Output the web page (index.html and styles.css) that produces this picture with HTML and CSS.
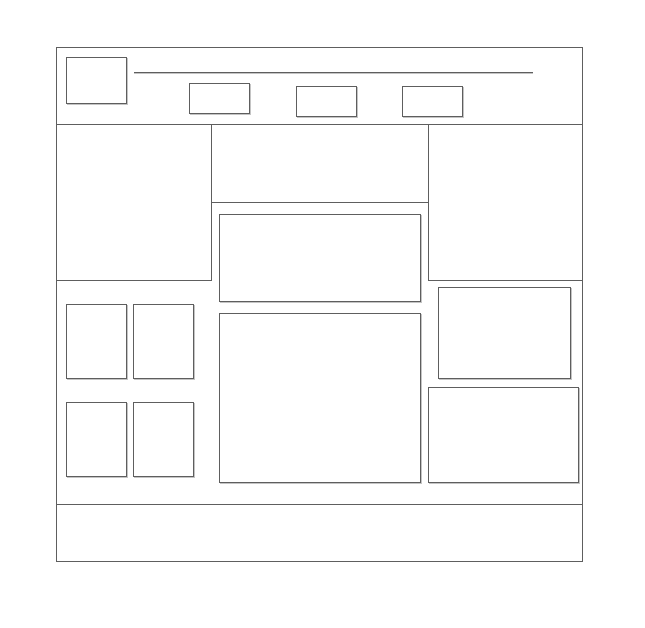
FILE: index.html
```html
<!DOCTYPE html>
<html lang="en">
	<head>
		<meta charset="UTF-8" />
		<meta name="viewport" content="width=device-width, initial-scale=1.0" />
		<link rel="stylesheet" href="styles.css">
		<title>Wireframe</title>
	</head>
	<body>
		<div class="frame">
			<div class="header">
				<div class="logo box"></div>
				<div class="head_right">
					<div class="rule"></div>
					<div class="nav">
						<div class="nav_item box first"></div>
						<div class="nav_item box"></div>
						<div class="nav_item box"></div>
					</div>
				</div>
			</div>
			<div class="main">
				<div class="left_top"></div>
				<div class="mid_top"></div>
				<div class="right_top"></div>
				<div class="left_bottom">
					<div class="thumb box"></div>
					<div class="thumb box"></div>
					<div class="thumb box"></div>
					<div class="thumb box"></div>
				</div>
				<div class="mid_content">
					<div class="mid_box box"></div>
					<div class="mid_box big box"></div>
				</div>
				<div class="right_bottom">
					<div class="side_a box"></div>
					<div class="side_b box"></div>
				</div>
			</div>
			<div class="footer"></div>
		</div>
	</body>
</html>
```

FILE: styles.css
```css
* {
	margin: 0;
	padding: 0;
	box-sizing: border-box;
}
body {
	background-color: #fff;
	width: 645px;
	height: 628px;
}
.box {
	border: 1px solid #5e5e5e;
	box-shadow: 1px 1px 0 #c4c4c4;
}
.frame {
	margin: 47px 0 0 56px;
	width: 527px;
	height: 515px;
	border: 1px solid #5e5e5e;
	display: flex;
	flex-direction: column;
}

/* header */
.header {
	height: 77px;
	border-bottom: 1px solid #5e5e5e;
	display: flex;
	align-items: flex-start;
	padding: 9px 0 0 9px;
}
.logo {
	width: 61px;
	height: 47px;
}
.head_right {
	margin-left: 7px;
	padding-top: 15px;
}
.rule {
	width: 399px;
	height: 1px;
	background-color: #5e5e5e;
	box-shadow: 0 1px 0 #c4c4c4;
}
.nav {
	display: flex;
	align-items: flex-start;
	margin-top: 10px;
	padding-left: 55px;
}
.nav_item {
	width: 61px;
	height: 31px;
	margin-top: 3px;
	margin-left: 46px;
}
.nav_item:last-child {
	margin-left: 45px;
}
.nav_item.first {
	margin: 0;
}

/* body grid */
.main {
	flex: 1;
	display: grid;
	grid-template-columns: 155px 216px 1fr;
	grid-template-rows: 78px 78px 1fr;
}
.left_top {
	grid-column: 1;
	grid-row: 1/3;
	border-right: 1px solid #5e5e5e;
	border-bottom: 1px solid #5e5e5e;
}
.mid_top {
	grid-column: 2;
	grid-row: 1;
	border-bottom: 1px solid #5e5e5e;
}
.right_top {
	grid-column: 3;
	grid-row: 1/3;
	border-left: 1px solid #5e5e5e;
	border-bottom: 1px solid #5e5e5e;
}
.left_bottom {
	grid-column: 1;
	grid-row: 3;
	display: grid;
	grid-template-columns: repeat(2, 61px);
	grid-template-rows: repeat(2, 75px);
	column-gap: 6px;
	row-gap: 23px;
	padding: 23px 0 0 9px;
}
.mid_content {
	grid-column: 2;
	grid-row: 2/4;
	padding: 11px 0 0 7px;
	display: flex;
	flex-direction: column;
	gap: 11px;
}
.mid_box {
	width: 202px;
	height: 88px;
}
.mid_box.big {
	height: 170px;
}
.right_bottom {
	grid-column: 3;
	grid-row: 3;
	padding-top: 6px;
	display: flex;
	flex-direction: column;
	gap: 8px;
}
.side_a {
	width: 133px;
	height: 92px;
	margin-left: 10px;
}
.side_b {
	width: 151px;
	height: 96px;
}

.footer {
	height: 57px;
	border-top: 1px solid #5e5e5e;
}
```
